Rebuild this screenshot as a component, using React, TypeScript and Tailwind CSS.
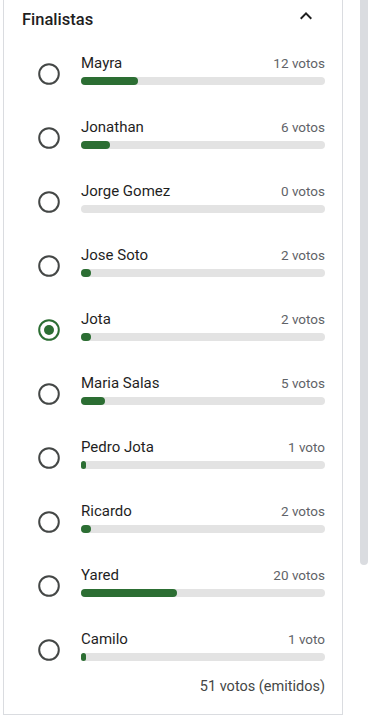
const finalists = [
  { name: 'Mayra', votes: 12 },
  { name: 'Jonathan', votes: 6 },
  { name: 'Jorge Gomez', votes: 0 },
  { name: 'Jose Soto', votes: 2 },
  { name: 'Jota', votes: 2, selected: true },
  { name: 'Maria Salas', votes: 5 },
  { name: 'Pedro Jota', votes: 1 },
  { name: 'Ricardo', votes: 2 },
  { name: 'Yared', votes: 20 },
  { name: 'Camilo', votes: 1 },
];

const total = 51;

function Radio({ checked }: { checked?: boolean }) {
  return (
    <svg width="24" height="24" viewBox="0 0 24 24" className="shrink-0">
      <circle
        cx="12"
        cy="12"
        r="9.8"
        fill="none"
        stroke={checked ? '#2c6e33' : '#444746'}
        strokeWidth="2"
      />
      {checked && <circle cx="12" cy="12" r="5" fill="#2c6e33" />}
    </svg>
  );
}

export default function App() {
  return (
    <div className="flex bg-white h-[720px] overflow-hidden" style={{ fontFamily: 'Roboto, "Noto Sans", sans-serif' }}>
      <div className="ml-[3px] w-[340px] h-[715px] border-l border-r border-b border-[#dadce0] pl-[18px] pr-[17px]">
        <div className="flex justify-between h-[32px]">
          <h2 className="pt-[8px] text-[16.5px] leading-6 font-medium text-[#1f1f1f]">Finalistas</h2>
          <svg width="24" height="24" viewBox="0 0 24 24" className="mt-[4px] mr-[7px]">
            <path d="M12 8l-6 6 1.41 1.41L12 10.83l4.59 4.58L18 14z" fill="#1f1f1f" />
          </svg>
        </div>

        {finalists.map((f) => (
          <div key={f.name} className="flex items-start h-[64px] pt-[21px]">
            <div className="ml-[15px] mt-[9px]">
              <Radio checked={f.selected} />
            </div>
            <div className="ml-[20px] flex-1">
              <div className="flex justify-between items-baseline h-5">
                <span className="text-[15px] leading-5 text-[#1f1f1f]">{f.name}</span>
                <span className="text-[13.5px] leading-5 text-[#5f6368]">
                  {f.votes} {f.votes === 1 ? 'voto' : 'votos'}
                </span>
              </div>
              <div className="mt-[4px] h-[8px] rounded-full bg-[#e3e3e3]">
                {f.votes > 0 && (
                  <div
                    className="h-full rounded-full bg-[#2c6e33]"
                    style={{ width: `${(f.votes / total) * 100}%` }}
                  />
                )}
              </div>
            </div>
          </div>
        ))}

        <div className="pt-[5px] text-right text-[14.5px] leading-5 text-[#444746]">
          51 votos (emitidos)
        </div>
      </div>
      <div className="ml-[17px] w-[8px] h-[565px] rounded-b-full bg-[#dadce0]" />
    </div>
  );
}
